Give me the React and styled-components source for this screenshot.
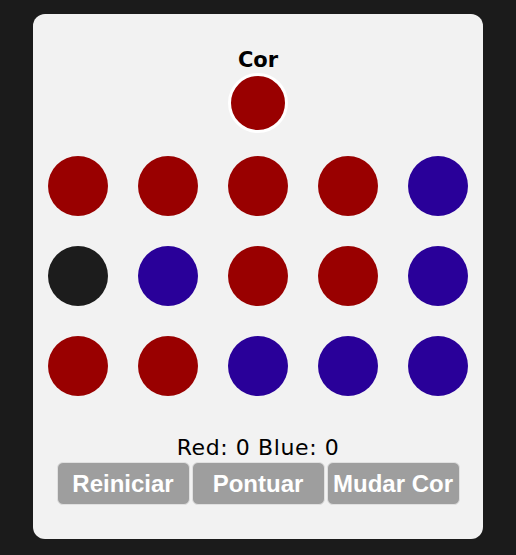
import React from 'react';
import styled, { createGlobalStyle } from 'styled-components';

const board = [
  ['red', 'red', 'red', 'red', 'blue'],
  ['black', 'blue', 'red', 'red', 'blue'],
  ['red', 'red', 'blue', 'blue', 'blue'],
];

const colors = {
  red: '#990000',
  blue: '#290099',
  black: '#1c1c1c',
};

const GlobalStyle = createGlobalStyle`
  html, body {
    margin: 0;
    padding: 0;
    background: #1b1b1b;
  }
  body {
    font-family: "DejaVu Sans", "Noto Sans", sans-serif;
  }
`;

const Page = styled.div`
  display: flex;
  justify-content: center;
  padding-top: 14px;
  min-height: 555px;
  box-sizing: border-box;
`;

const Card = styled.div`
  width: 450px;
  height: 525px;
  box-sizing: border-box;
  background: #f2f2f2;
  border-radius: 12px;
  padding: 33px 15px 0;
  display: flex;
  flex-direction: column;
  align-items: center;
`;

const Title = styled.div`
  font-weight: bold;
  font-size: 21px;
  line-height: 26px;
  color: #000;
`;

const Current = styled.div`
  width: 54px;
  height: 54px;
  border-radius: 50%;
  background: ${p => colors[p.$color]};
  border: 3px solid #fff;
`;

const Grid = styled.div`
  display: grid;
  grid-template-columns: repeat(5, 60px);
  gap: 30px;
  margin-top: 23px;
`;

const Disc = styled.div`
  width: 60px;
  height: 60px;
  border-radius: 50%;
  background: ${p => colors[p.$color]};
`;

const Score = styled.div`
  margin-top: 38px;
  font-size: 22px;
  letter-spacing: 0.6px;
  line-height: 28px;
  color: #000;
`;

const Buttons = styled.div`
  display: flex;
  gap: 2px;
`;

const Button = styled.button`
  width: 133px;
  height: 43px;
  padding: 0;
  border: 1px solid #e0e0e0;
  border-radius: 6px;
  background: #9e9e9e;
  color: #fff;
  font-family: "Liberation Sans", Arial, sans-serif;
  font-weight: bold;
  font-size: 24px;
  cursor: pointer;
`;

export default function App() {
  return (
    <Page>
      <GlobalStyle />
      <Card>
        <Title>Cor</Title>
        <Current $color="red" />
        <Grid>
          {board.flat().map((c, i) => (
            <Disc key={i} $color={c} />
          ))}
        </Grid>
        <Score>Red: 0 Blue: 0</Score>
        <Buttons>
          <Button>Reiniciar</Button>
          <Button>Pontuar</Button>
          <Button>Mudar Cor</Button>
        </Buttons>
      </Card>
    </Page>
  );
}
